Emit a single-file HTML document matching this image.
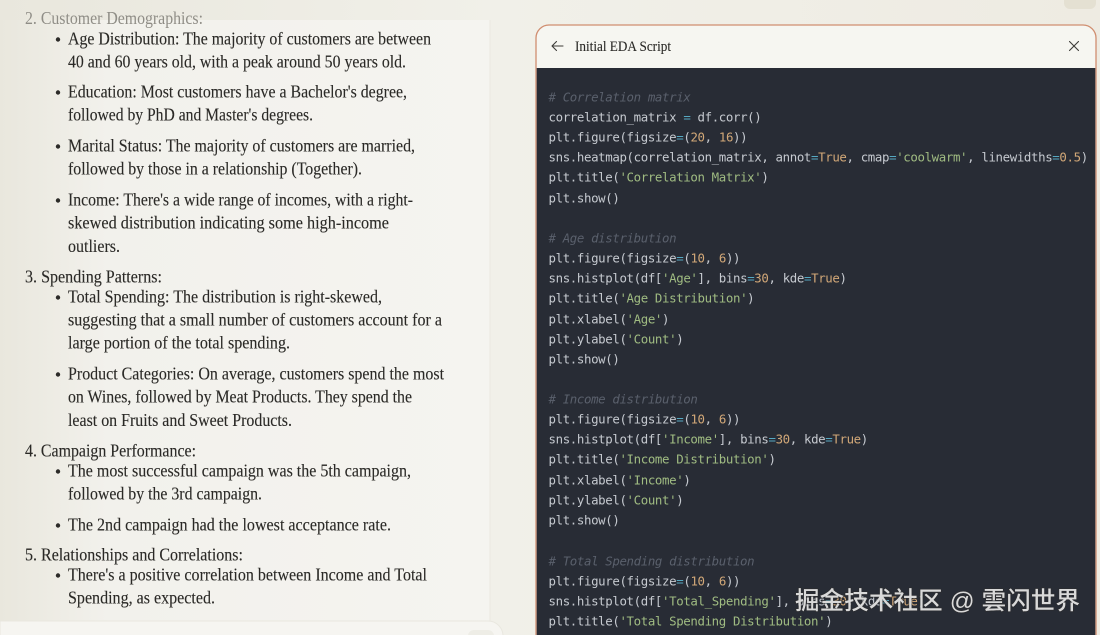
<!DOCTYPE html>
<html><head><meta charset="utf-8">
<style>
html,body{margin:0;padding:0;background:#efede5;width:1100px;height:635px;overflow:hidden}
svg{display:block;position:absolute;left:0;top:0}
.s text{font-family:"Liberation Serif",serif;font-size:17.4px;fill:#2a2926;stroke:#2a2926;stroke-width:.12px}
.m text{font-family:"DejaVu Sans Mono",monospace;font-size:12.4px;letter-spacing:-.365px;fill:#c6cad0;white-space:pre}
.m .c{fill:#5a606c;font-style:italic}
.m tspan.o{fill:#56a9c2}.m tspan.n{fill:#d2a878}.m tspan.t{fill:#a0bc82}
.blur{filter:blur(.3px)}
</style></head><body>
<svg width="1100" height="635" viewBox="0 0 1100 635" xmlns="http://www.w3.org/2000/svg">
<defs>
<linearGradient id="bg" x1="0" y1="0" x2="1" y2="0"><stop offset="0" stop-color="#e9e7dd"/><stop offset=".45" stop-color="#f1f0e9"/><stop offset="1" stop-color="#eeebe2"/></linearGradient>
<linearGradient id="pn" x1="0" y1="0" x2="1" y2="0"><stop offset="0" stop-color="#e9e7dd"/><stop offset=".22" stop-color="#f2f1ec"/><stop offset="1" stop-color="#f5f4f0"/></linearGradient>
<linearGradient id="fade" x1="0" y1="0" x2="0" y2="1"><stop offset="0" stop-color="#e9e7dd" stop-opacity="0"/><stop offset="1" stop-color="#f4f3ee"/></linearGradient>
<linearGradient id="hd" x1="0" y1="0" x2="0" y2="1"><stop offset="0" stop-color="#f6f6f1"/><stop offset="1" stop-color="#f9f8f4"/></linearGradient>
</defs>
<rect width="1100" height="635" fill="url(#bg)"/>
<rect x="0" y="20" width="490" height="602" fill="url(#pn)"/>
<line x1="490" y1="20" x2="490" y2="622" stroke="#ebe9e1"/>
<path d="M0 621H488a15 15 0 0 1 15 15H0Z" fill="#f6f5f1" stroke="#e9e7df"/>
<rect x="468" y="630" width="26" height="12" rx="6" fill="#eeede6"/>
<path d="M1064 -4H1096V3a6 6 0 0 1-6 6H1070a6 6 0 0 1-6-6Z" fill="#e4e0d2"/>

<g class="s blur">
<text x="25" y="24" textLength="178" lengthAdjust="spacingAndGlyphs" style="fill:#8f8d86;stroke:none">2. Customer Demographics:</text>
<text x="68" y="44.5" textLength="363" lengthAdjust="spacingAndGlyphs">Age Distribution: The majority of customers are between</text>
<text x="68" y="67.5" textLength="338" lengthAdjust="spacingAndGlyphs">40 and 60 years old, with a peak around 50 years old.</text>
<text x="68" y="97.5" textLength="339" lengthAdjust="spacingAndGlyphs">Education: Most customers have a Bachelor's degree,</text>
<text x="68" y="120.5" textLength="245" lengthAdjust="spacingAndGlyphs">followed by PhD and Master's degrees.</text>
<text x="68" y="151.5" textLength="347" lengthAdjust="spacingAndGlyphs">Marital Status: The majority of customers are married,</text>
<text x="68" y="174.5" textLength="294" lengthAdjust="spacingAndGlyphs">followed by those in a relationship (Together).</text>
<text x="68" y="205.5" textLength="345" lengthAdjust="spacingAndGlyphs">Income: There's a wide range of incomes, with a right-</text>
<text x="68" y="228.5" textLength="321" lengthAdjust="spacingAndGlyphs">skewed distribution indicating some high-income</text>
<text x="68" y="252" textLength="52" lengthAdjust="spacingAndGlyphs">outliers.</text>
<text x="25" y="282.5" textLength="137" lengthAdjust="spacingAndGlyphs">3. Spending Patterns:</text>
<text x="68" y="302.5" textLength="314" lengthAdjust="spacingAndGlyphs">Total Spending: The distribution is right-skewed,</text>
<text x="68" y="325.5" textLength="374" lengthAdjust="spacingAndGlyphs">suggesting that a small number of customers account for a</text>
<text x="68" y="348.5" textLength="222" lengthAdjust="spacingAndGlyphs">large portion of the total spending.</text>
<text x="68" y="379.5" textLength="376" lengthAdjust="spacingAndGlyphs">Product Categories: On average, customers spend the most</text>
<text x="68" y="402.5" textLength="344" lengthAdjust="spacingAndGlyphs">on Wines, followed by Meat Products. They spend the</text>
<text x="68" y="426" textLength="224" lengthAdjust="spacingAndGlyphs">least on Fruits and Sweet Products.</text>
<text x="25" y="456.5" textLength="171" lengthAdjust="spacingAndGlyphs">4. Campaign Performance:</text>
<text x="68" y="476.5" textLength="343" lengthAdjust="spacingAndGlyphs">The most successful campaign was the 5th campaign,</text>
<text x="68" y="499.5" textLength="194" lengthAdjust="spacingAndGlyphs">followed by the 3rd campaign.</text>
<text x="68" y="530.5" textLength="323" lengthAdjust="spacingAndGlyphs">The 2nd campaign had the lowest acceptance rate.</text>
<text x="25" y="560.5" textLength="218" lengthAdjust="spacingAndGlyphs">5. Relationships and Correlations:</text>
<text x="68" y="580.5" textLength="359" lengthAdjust="spacingAndGlyphs">There's a positive correlation between Income and Total</text>
<text x="68" y="603.5" textLength="147" lengthAdjust="spacingAndGlyphs">Spending, as expected.</text>
<g fill="#2c2b28" style="stroke:none">
<circle cx="58" cy="39.5" r="2.2"/><circle cx="58" cy="92.5" r="2.2"/><circle cx="58" cy="146.5" r="2.2"/><circle cx="58" cy="200.5" r="2.2"/><circle cx="58" cy="297.5" r="2.2"/><circle cx="58" cy="374.5" r="2.2"/><circle cx="58" cy="471.5" r="2.2"/><circle cx="58" cy="525.5" r="2.2"/><circle cx="58" cy="575.5" r="2.2"/>
</g>
</g>

<!-- artifact panel -->
<path d="M536 640V38a13 13 0 0 1 13-13H1083a13 13 0 0 1 13 13V640Z" fill="url(#hd)" stroke="#d08e70" stroke-width="1.3"/>
<rect x="536.7" y="68" width="558.6" height="570" fill="#282c35"/>
<g fill="none" stroke="#3d3c38" stroke-width="1.1" stroke-linecap="round" stroke-linejoin="round">
<path d="M552 46H563M556.5 41.5L552 46L556.5 50.5"/>
<path d="M1069.5 41.5L1078.5 50.5M1078.5 41.5L1069.5 50.5"/>
</g>
<text x="575" y="51" textLength="96" lengthAdjust="spacingAndGlyphs" style="font-family:'Liberation Serif',serif;font-size:14.6px;fill:#2a2926;stroke:#2a2926;stroke-width:.1px">Initial EDA Script</text>

<g class="m blur">
<text x="548.5" y="101.5" class="c"># Correlation matrix</text>
<text x="548.5" y="121.5">correlation_matrix <tspan class="o">=</tspan> df.corr()</text>
<text x="548.5" y="141.5">plt.figure(figsize<tspan class="o">=</tspan>(<tspan class="n">20</tspan>, <tspan class="n">16</tspan>))</text>
<text x="548.5" y="161.5">sns.heatmap(correlation_matrix, annot<tspan class="o">=</tspan><tspan class="n">True</tspan>, cmap<tspan class="o">=</tspan><tspan class="t">'coolwarm'</tspan>, linewidths<tspan class="o">=</tspan><tspan class="n">0.5</tspan>)</text>
<text x="548.5" y="181.5">plt.title(<tspan class="t">'Correlation Matrix'</tspan>)</text>
<text x="548.5" y="202.5">plt.show()</text>
<text x="548.5" y="242.5" class="c"># Age distribution</text>
<text x="548.5" y="262.5">plt.figure(figsize<tspan class="o">=</tspan>(<tspan class="n">10</tspan>, <tspan class="n">6</tspan>))</text>
<text x="548.5" y="282.5">sns.histplot(df[<tspan class="t">'Age'</tspan>], bins<tspan class="o">=</tspan><tspan class="n">30</tspan>, kde<tspan class="o">=</tspan><tspan class="n">True</tspan>)</text>
<text x="548.5" y="302.5">plt.title(<tspan class="t">'Age Distribution'</tspan>)</text>
<text x="548.5" y="323.5">plt.xlabel(<tspan class="t">'Age'</tspan>)</text>
<text x="548.5" y="343.5">plt.ylabel(<tspan class="t">'Count'</tspan>)</text>
<text x="548.5" y="363.5">plt.show()</text>
<text x="548.5" y="403.5" class="c"># Income distribution</text>
<text x="548.5" y="423.5">plt.figure(figsize<tspan class="o">=</tspan>(<tspan class="n">10</tspan>, <tspan class="n">6</tspan>))</text>
<text x="548.5" y="443.5">sns.histplot(df[<tspan class="t">'Income'</tspan>], bins<tspan class="o">=</tspan><tspan class="n">30</tspan>, kde<tspan class="o">=</tspan><tspan class="n">True</tspan>)</text>
<text x="548.5" y="463.5">plt.title(<tspan class="t">'Income Distribution'</tspan>)</text>
<text x="548.5" y="484.5">plt.xlabel(<tspan class="t">'Income'</tspan>)</text>
<text x="548.5" y="504.5">plt.ylabel(<tspan class="t">'Count'</tspan>)</text>
<text x="548.5" y="524.5">plt.show()</text>
<text x="548.5" y="565.5" class="c"># Total Spending distribution</text>
<text x="548.5" y="585.5">plt.figure(figsize<tspan class="o">=</tspan>(<tspan class="n">10</tspan>, <tspan class="n">6</tspan>))</text>
<text x="548.5" y="605.5">sns.histplot(df[<tspan class="t">'Total_Spending'</tspan>], bins<tspan class="o">=</tspan><tspan class="n">30</tspan>, kde<tspan class="o">=</tspan><tspan class="n">True</tspan>)</text>
<text x="548.5" y="625.5">plt.title(<tspan class="t">'Total Spending Distribution'</tspan>)</text>
</g>

<text x="795" y="609" textLength="285" style="font-family:'Liberation Sans','Noto Sans CJK SC',sans-serif;font-size:24.5px;font-weight:500;fill:#d9d9d9;paint-order:stroke;stroke:rgba(45,45,45,.6);stroke-width:1.6px">掘金技术社区 @ 雲闪世界</text>
</svg>
</body></html>
